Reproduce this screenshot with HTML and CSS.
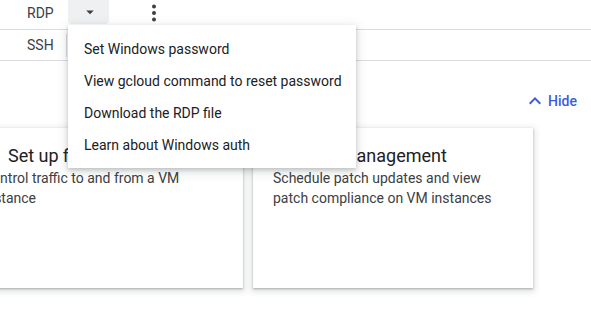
FILE: index.html
```html
<!DOCTYPE html>
<html lang="en">

<head>
  <meta charset="UTF-8">
  <meta name="viewport" content="width=device-width, initial-scale=1.0">
  <title>VM instances</title>
  <link rel="stylesheet" href="styles.css">
</head>

<body>
  <div class="connect">
    <div class="connect-row">
      <span class="connect-label">RDP</span>
      <div class="dropdown">
        <button class="dropdown-btn" aria-label="More RDP options">
          <svg viewBox="0 0 24 24" width="18" height="18"><path d="M7 10l5 5 5-5z" /></svg>
        </button>
        <ul class="menu">
          <li class="menu-item">Set Windows password</li>
          <li class="menu-item">View gcloud command to reset password</li>
          <li class="menu-item">Download the RDP file</li>
          <li class="menu-item">Learn about Windows auth</li>
        </ul>
      </div>
      <button class="more-btn" aria-label="More actions">
        <svg viewBox="0 0 24 26" width="24" height="26">
          <circle cx="12" cy="6.5" r="2" />
          <circle cx="12" cy="13" r="2" />
          <circle cx="12" cy="19.5" r="2" />
        </svg>
      </button>
    </div>
    <div class="connect-row connect-row--ssh">
      <span class="connect-label">SSH</span>
      <span class="divider"></span>
    </div>
  </div>

  <div class="hide-bar">
    <a class="hide-link" href="#">
      <svg viewBox="0 0 24 24" width="24" height="24"><path d="M12 8l-6 6 1.41 1.41L12 10.83l4.59 4.58L18 14z" /></svg>
      Hide
    </a>
  </div>

  <div class="cards">
    <div class="card">
      <div class="card-title card-title--wide">Set up firewall rules</div>
      <p class="card-text">Control traffic to and from a VM instance</p>
    </div>
    <div class="card">
      <div class="card-title">Patch management</div>
      <p class="card-text">Schedule patch updates and view patch compliance on VM instances</p>
    </div>
  </div>
</body>

</html>
```

FILE: styles.css
```css
body {
  margin: 0;
  font-family: Roboto, 'Noto Sans', sans-serif;
  font-size: 14px;
  color: #3c4043;
  background: #fff;
}

button {
  border: none;
  background: none;
  padding: 0;
  font: inherit;
  cursor: pointer;
}

.connect-row {
  display: flex;
  align-items: flex-start;
  height: 29px;
  border-bottom: 1px solid #dadce0;
}

.connect-row--ssh {
  height: 30px;
  align-items: center;
}

.connect-label {
  width: 68px;
  box-sizing: border-box;
  padding-left: 27px;
  line-height: 26px;
  color: #3c4043;
}

.connect-row--ssh .connect-label {
  width: 66px;
}

.divider {
  width: 1px;
  height: 23px;
  background: #dadce0;
}

.dropdown {
  position: relative;
}

.dropdown-btn {
  display: flex;
  align-items: center;
  justify-content: center;
  width: 41px;
  height: 24px;
  border-radius: 0 0 4px 4px;
  background: #eef0f1;
}

.dropdown-btn svg {
  fill: #3c4043;
  margin-left: 3px;
}

.more-btn {
  display: flex;
  margin-left: 33px;
  width: 24px;
  height: 26px;
}

.more-btn svg {
  fill: #3c4043;
}

.menu {
  position: absolute;
  top: 25px;
  left: 0;
  z-index: 5;
  width: 288px;
  margin: 0;
  padding: 8px 0 7px;
  list-style: none;
  background: #fff;
  box-shadow: 0 2px 4px rgba(60, 64, 67, 0.25), 0 3px 10px 2px rgba(60, 64, 67, 0.12);
}

.menu-item {
  height: 32px;
  line-height: 32px;
  padding: 0 16px;
  color: #202124;
  white-space: nowrap;
}

.hide-bar {
  display: flex;
  justify-content: flex-end;
  padding: 28px 14px 0;
}

.hide-link {
  display: flex;
  align-items: center;
  gap: 1px;
  height: 24px;
  color: #3b5ddb;
  font-weight: 500;
  text-decoration: none;
}

.hide-link svg {
  fill: #3b5ddb;
}

.cards {
  display: flex;
  gap: 10px;
  margin: 15px 0 0 -37px;
  padding-bottom: 20px;
}

.card {
  flex: none;
  width: 280px;
  height: 160px;
  box-sizing: border-box;
  padding: 16px 20px;
  background: #fff;
  box-shadow: 0 1px 2px rgba(60, 64, 67, 0.35), 0 2px 6px 2px rgba(60, 64, 67, 0.15);
}

.card-title {
  padding-left: 17px;
  font-size: 18px;
  line-height: 24px;
  color: #202124;
  white-space: nowrap;
}

.card-title--wide {
  padding-left: 25px;
}

.card-text {
  margin: 0;
  line-height: 20px;
  color: #3c4043;
}
```
